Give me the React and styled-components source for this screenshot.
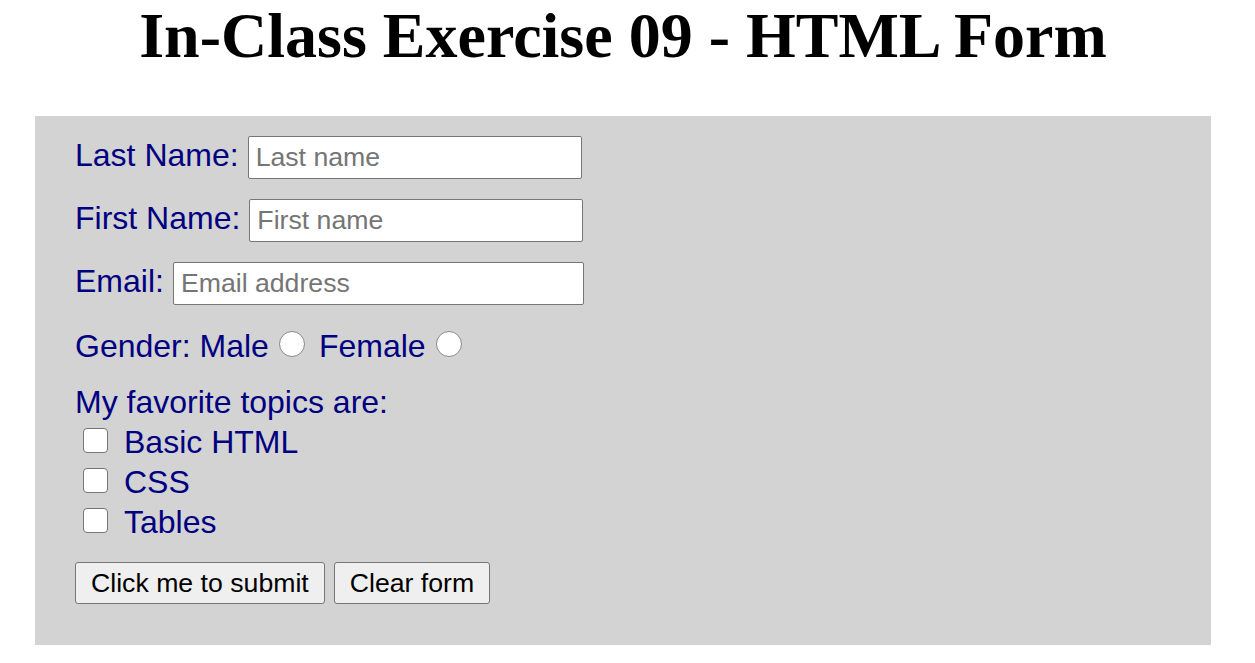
import React from "react";
import styled, { createGlobalStyle } from "styled-components";

const Global = createGlobalStyle`
  html, body { margin: 0; padding: 0; background: #ffffff; }
  body { font-family: "Liberation Sans", Arial, sans-serif; }
`;

const Page = styled.div`
  width: 1176px;
  margin-left: 35px;
`;

const Title = styled.h1`
  margin: 0;
  padding-top: 4px;
  font-family: "Liberation Serif", "Times New Roman", serif;
  font-weight: bold;
  font-size: 64px;
  line-height: 64px;
  text-align: center;
  color: #000;
`;

const Form = styled.form`
  margin-top: 48px;
  background: #d3d3d3;
  padding: 19px 40px 41px 40px;
  display: flex;
  flex-direction: column;
  color: #000080;
  font-size: 32px;
  font-family: "Liberation Sans", Arial, sans-serif;
`;

const FieldRow = styled.div`
  display: flex;
  align-items: baseline;
  gap: 9px;
  height: 43px;
  margin-bottom: ${(p) => p.$mb || 0}px;
`;

const Label = styled.label`
  line-height: 40px;
  white-space: nowrap;
`;

const TextInput = styled.input`
  box-sizing: border-box;
  width: ${(p) => p.$w}px;
  height: 43px;
  border: 1px solid #767676;
  border-radius: 2px;
  background: #fff;
  padding: 0 7px;
  font-family: "Liberation Sans", Arial, sans-serif;
  font-size: 26.67px;
  color: #000;
  outline: none;
  &::placeholder { color: #757575; }
`;

const LineRow = styled.div`
  display: flex;
  align-items: baseline;
  height: 40px;
  line-height: 40px;
  white-space: nowrap;
  margin-top: ${(p) => p.$mt || 0}px;
`;

const Radio = styled.input.attrs({ type: "radio" })`
  appearance: none;
  -webkit-appearance: none;
  box-sizing: border-box;
  width: 26px;
  height: 26px;
  margin: 0 14px 1px 10px;
  border: 1px solid #8a8a8a;
  border-radius: 50%;
  background: #fff;
`;

const Check = styled.input.attrs({ type: "checkbox" })`
  appearance: none;
  -webkit-appearance: none;
  box-sizing: border-box;
  width: 25px;
  height: 25px;
  margin: 0 16px 0 8px;
  border: 1px solid #767676;
  border-radius: 4px;
  background: #fff;
`;

const ButtonRow = styled.div`
  display: flex;
  gap: 9px;
  margin-top: 20px;
`;

const Button = styled.button`
  box-sizing: border-box;
  height: 42px;
  padding: 0 15px;
  border: 1px solid #767676;
  border-radius: 3px;
  background: #efefef;
  color: #000;
  font-family: "Liberation Sans", Arial, sans-serif;
  font-size: 26.67px;
`;

export default function App() {
  return (
    <>
      <Global />
      <Page>
        <Title>In-Class Exercise 09 - HTML Form</Title>
        <Form onSubmit={(e) => e.preventDefault()}>
          <FieldRow $mb={20}>
            <Label>Last Name:</Label>
            <TextInput $w={334} placeholder="Last name" />
          </FieldRow>
          <FieldRow $mb={20}>
            <Label>First Name:</Label>
            <TextInput $w={334} placeholder="First name" />
          </FieldRow>
          <FieldRow>
            <Label>Email:</Label>
            <TextInput $w={411} placeholder="Email address" />
          </FieldRow>
          <LineRow $mt={22}>
            Gender: Male<Radio name="g" />Female<Radio name="g" />
          </LineRow>
          <LineRow $mt={16}>My favorite topics are:</LineRow>
          <LineRow>
            <Check />Basic HTML
          </LineRow>
          <LineRow>
            <Check />CSS
          </LineRow>
          <LineRow>
            <Check />Tables
          </LineRow>
          <ButtonRow>
            <Button type="submit">Click me to submit</Button>
            <Button type="reset">Clear form</Button>
          </ButtonRow>
        </Form>
      </Page>
    </>
  );
}
